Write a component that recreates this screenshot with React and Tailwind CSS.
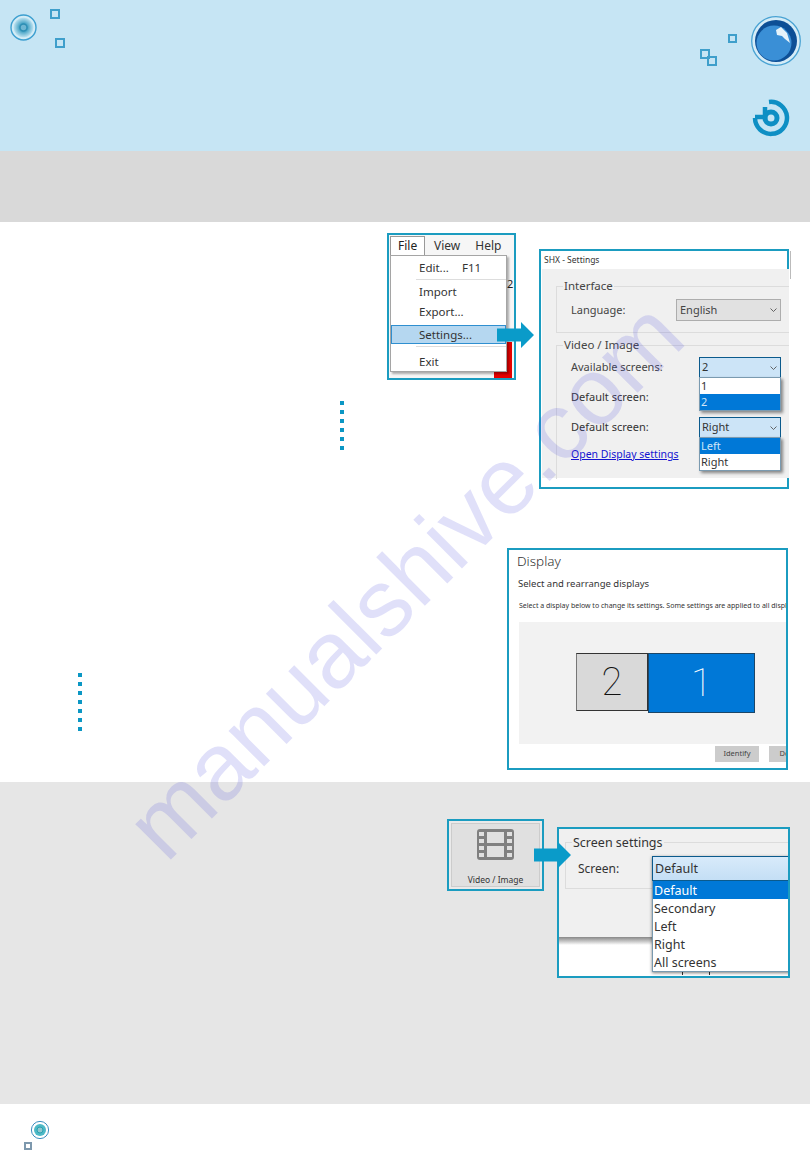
const fontUi = "font-['Noto_Sans',sans-serif]";

function Dots({ count = 6 }) {
  return (
    <div className="flex flex-col gap-[5px]">
      {Array.from({ length: count }).map((_, i) => (
        <div key={i} className="w-[4px] h-[4px] bg-[#0b97c4]"></div>
      ))}
    </div>
  );
}

function Arrow({ className }) {
  return (
    <svg className={className} width="37" height="26" viewBox="0 0 37 26">
      <path d="M0 6.5H24V0L37 13L24 26V19.5H0Z" fill="#0a9bc9" />
    </svg>
  );
}

function Chevron({ className }) {
  return (
    <svg className={className} width="7" height="4" viewBox="0 0 7 4" fill="none">
      <path d="M0.5 0.5L3.5 3.5L6.5 0.5" stroke="#555" strokeWidth="0.9" />
    </svg>
  );
}

function Select({ value, active }) {
  return (
    <div
      className={
        active
          ? "w-[82px] h-[21px] pl-[2px] pr-[3px] flex items-center justify-between bg-[#cce4f7] border border-[#0b5a8c] text-[11px] text-[#333]"
          : "w-[105px] h-[22px] pl-[3px] pr-[3px] flex items-center justify-between bg-[#e1e1e1] border border-[#adadad] text-[11px] text-[#444]"
      }
    >
      <span>{value}</span>
      <Chevron />
    </div>
  );
}

function DropList({ items, selected, className }) {
  return (
    <div className={`absolute z-10 bg-white border border-[#7a9ab0] shadow-[2px_2px_3px_rgba(0,0,0,0.45)] ${className}`}>
      {items.map((item) => (
        <div
          key={item}
          className={
            item === selected
              ? "h-[16px] pl-[1px] flex items-center bg-[#0078d7] text-[#cfe6f8] text-[11px]"
              : "h-[16px] pl-[1px] flex items-center text-[#333] text-[11px]"
          }
        >
          {item}
        </div>
      ))}
    </div>
  );
}

function MenuBox() {
  return (
    <div className={`relative w-[129px] h-[147px] border-2 border-[#1b9cc0] bg-[#f6f6f6] overflow-hidden ${fontUi} text-[12px] text-[#333]`}>
      <div className="flex h-[19px] mt-[1px] ml-[1px] text-[12px]">
        <div className="w-[35px] pl-[7px] bg-white border border-b-0 border-[#999] text-[#222] leading-[17px]">File</div>
        <div className="ml-[9px] leading-[19px]">View</div>
        <div className="ml-[15px] leading-[19px]">Help</div>
      </div>
      <div className="absolute right-[2px] bottom-0 w-[18px] h-[36px] bg-[#e60000]"></div>
      <div className="absolute left-[118px] top-[43px] text-[11px] leading-none text-[#222]">2</div>
      <div className="relative w-[117px] h-[117px] ml-[1px] bg-white border border-[#a5a5a5] shadow-[2px_2px_2px_rgba(0,0,0,0.3)]">
        <div className="h-[23px] pl-[28px] flex items-center text-[11.5px] text-[#333]">
          <span className="w-[43px]">Edit...</span>
          <span>F11</span>
        </div>
        <div className="ml-[25px] h-px bg-[#ddd]"></div>
        <div className="mt-[2px] h-[20px] pl-[28px] flex items-center text-[11.5px]">Import</div>
        <div className="h-[20px] pl-[28px] flex items-center text-[11.5px]">Export...</div>
        <div className="mt-[3px] w-[115px] h-[19px] pl-[27px] flex items-center bg-[#b5d7f0] border border-[#2f8fd0] text-[11.5px]">Settings...</div>
        <div className="mt-[2px] ml-[25px] h-px bg-[#ddd]"></div>
        <div className="h-[26px] pt-[3px] pl-[28px] flex items-center text-[11.5px]">Exit</div>
      </div>
    </div>
  );
}

function Fieldset({ label, className, children }) {
  return (
    <div className={`relative ml-[14px] border border-r-0 border-[#dcdcdc] ${className}`}>
      <span className="absolute -top-[9px] left-[6px] px-[1px] bg-[#f0f0f0] text-[11.5px] leading-[16px] text-[#444]">{label}</span>
      {children}
    </div>
  );
}

function SettingsBox() {
  return (
    <div className={`relative w-[250px] h-[240px] border-2 border-[#1b9cc0] bg-white ${fontUi}`}>
      <div className="h-[18px] pl-[3px] flex items-center text-[8.5px] text-[#333]">SHX - Settings</div>
      <div className="absolute right-[-4px] top-0 w-px h-[28px] bg-[#bbb]"></div>
      <div className="ml-[1px] w-[247px] h-[209px] pt-[17px] bg-[#f0f0f0]">
        <Fieldset label="Interface" className="h-[47px]">
          <div className="mt-[12px] pl-[14px] pr-[8px] flex items-center justify-between text-[11px] text-[#444]">
            <span>Language:</span>
            <Select value="English" />
          </div>
        </Fieldset>
        <Fieldset label="Video / Image" className="mt-[12px] h-[134px] border-b-0">
          <div className="mt-[11px] pl-[14px] pr-[8px] flex items-center justify-between text-[11px] text-[#444]">
            <span>Available screens:</span>
            <div className="relative">
              <Select value="2" active />
              <DropList items={["1", "2"]} selected="2" className="left-0 top-[20px] w-[82px]" />
            </div>
          </div>
          <div className="mt-[10px] h-[18px] pl-[14px] flex items-center text-[11px] text-[#333]">Default screen:</div>
          <div className="mt-[11px] pl-[14px] pr-[8px] flex items-center justify-between text-[11px] text-[#333]">
            <span>Default screen:</span>
            <div className="relative">
              <Select value="Right" active />
              <DropList items={["Left", "Right"]} selected="Left" className="left-0 top-[20px] w-[82px]" />
            </div>
          </div>
          <div className="mt-[8px] pl-[14px] text-[10.5px] leading-[16px] text-[#1414d0] underline">Open Display settings</div>
        </Fieldset>
      </div>
    </div>
  );
}

function DisplayBox() {
  return (
    <div className={`w-[281px] h-[222px] border-2 border-[#1b9cc0] bg-white overflow-hidden ${fontUi}`}>
      <div className="pl-[8px] pt-[1px] text-[13.5px] leading-[20px] font-light text-[#333]">Display</div>
      <div className="pl-[9px] mt-[6px] text-[9.5px] leading-[14px] text-[#333]">Select and rearrange displays</div>
      <div className="pl-[10px] mt-[10px] text-[7px] leading-[10px] whitespace-nowrap text-[#333]">
        Select a display below to change its settings. Some settings are applied to all displays
      </div>
      <div className="ml-[10px] mt-[11px] h-[122px] pt-[31px] pl-[57px] flex items-start bg-[#f2f2f2]">
        <div className="w-[72px] h-[58px] flex items-center justify-center bg-[#d9d9d9] border border-[#333] border-l-[#777] font-['Roboto',sans-serif] text-[38px] font-thin text-[#111]">2</div>
        <div className="w-[107px] h-[60px] flex items-center justify-center bg-[#0078d7] border border-[#1c4668] font-['Roboto',sans-serif] text-[38px] font-thin text-white">1</div>
      </div>
      <div className="mt-[2px] flex pl-[206px] gap-[10px]">
        <div className="w-[44px] h-[16px] shrink-0 flex items-center justify-center bg-[#cccccc] text-[7.5px] text-[#444]">Identify</div>
        <div className="w-[44px] h-[16px] shrink-0 flex items-center justify-center bg-[#cccccc] text-[7.5px] text-[#444]">Detect</div>
      </div>
    </div>
  );
}

function VideoBox() {
  return (
    <div className="w-[97px] h-[72px] p-[2px] border-2 border-[#1b9cc0] bg-[#eaeaea]">
      <div className={`h-full pt-[5px] flex flex-col items-center bg-[#e0e0e0] border border-[#cccccc] ${fontUi}`}>
        <svg width="37" height="31" viewBox="0 0 37 31" fill="#808080" fillRule="evenodd">
          <path d="M3 0H34A3 3 0 0 1 37 3V28A3 3 0 0 1 34 31H3A3 3 0 0 1 0 28V3A3 3 0 0 1 3 0ZM2 3V7H7V3ZM2 10V14H7V10ZM2 17V21H7V17ZM2 24V28H7V24ZM30 3V7H35V3ZM30 10V14H35V10ZM30 17V21H35V17ZM30 24V28H35V24ZM10 3V14H27V3ZM10 17V28H27V17Z" />
        </svg>
        <div className="mt-[15px] text-[8.5px] leading-[10px] text-[#333]">Video / Image</div>
      </div>
    </div>
  );
}

function ScreenBox() {
  const items = ["Default", "Secondary", "Left", "Right", "All screens"];
  return (
    <div className={`relative w-[233px] h-[151px] border-2 border-[#1b9cc0] bg-white overflow-hidden ${fontUi}`}>
      <div className="h-[108px] pt-[13px] pl-[6px] bg-[#f0f0f0]">
        <div className="relative h-[47px] border border-r-0 border-[#dcdcdc]">
          <span className="absolute -top-[8px] left-[6px] px-[1px] bg-[#f0f0f0] text-[12.5px] leading-[16px] text-[#333]">Screen settings</span>
          <div className="pt-[18px] pl-[12px] text-[12px] leading-[16px] text-[#333]">Screen:</div>
        </div>
      </div>
      <div className="h-[8px] bg-gradient-to-b from-[#888] to-white"></div>
      <div className="absolute left-[123px] bottom-[1px] w-px h-[6px] bg-[#333]"></div>
      <div className="absolute left-[150px] bottom-[1px] w-px h-[6px] bg-[#333]"></div>
      <div className="absolute left-[93px] top-[27px] w-[140px] shadow-[0_1px_3px_rgba(0,0,0,0.5)]">
        <div className="h-[25px] pl-[2px] pt-[1px] flex items-center bg-gradient-to-b from-[#d8eafa] to-[#c4dff5] border border-[#0b5a8c] text-[12.5px] text-[#333]">Default</div>
        <div className="bg-white border-l border-b border-[#7a9ab0] text-[12.5px] text-[#333]">
          {items.map((item, index) => (
            <div
              key={item}
              className={
                index === 0
                  ? "h-[18px] pl-[1px] pt-[2px] flex items-center bg-[#0078d7] text-white"
                  : "h-[18px] pl-[1px] pt-[2px] flex items-center"
              }
            >
              {item}
            </div>
          ))}
        </div>
      </div>
    </div>
  );
}

function Square({ size = 9, color = "#3f9fcb" }) {
  return (
    <div
      className="border-2 bg-transparent"
      style={{ width: size, height: size, borderColor: color }}
    ></div>
  );
}

export default function App() {
  return (
    <div className="relative w-[810px] h-[1170px] overflow-hidden bg-white">
      <header className="h-[151px] flex justify-between bg-[#c6e5f4]">
        <div className="pt-[9px] pl-[10px] flex">
          <svg width="27" height="27" viewBox="0 0 27 27" className="mt-[5px]">
            <defs>
              <radialGradient id="lens">
                <stop offset="0.3" stopColor="#2f97bd" />
                <stop offset="1" stopColor="#bfe3f1" />
              </radialGradient>
            </defs>
            <circle cx="13.5" cy="13.5" r="12.5" fill="#d3ecf6" stroke="#3d9fd0" strokeWidth="1.4" />
            <circle cx="13.5" cy="13.5" r="10" fill="url(#lens)" />
            <circle cx="13.5" cy="13.5" r="3.5" fill="#6fb6d2" stroke="#2f8fb5" strokeWidth="1.5" />
          </svg>
          <div className="ml-[13px] flex flex-col">
            <Square size={10} />
            <div className="ml-[5px] mt-[19px]"><Square size={10} /></div>
          </div>
        </div>
        <div className="pt-[16px] pr-[9px] flex flex-col items-end">
          <div className="flex items-start">
            <div className="mt-[18px] mr-[14px] relative w-[37px] h-[34px]">
              <div className="absolute right-0 top-0"><Square size={9} /></div>
              <div className="absolute left-0 top-[15px]"><Square size={10} /></div>
              <div className="absolute left-[7px] top-[22px]"><Square size={10} /></div>
            </div>
            <svg width="50" height="50" viewBox="0 0 50 50">
              <circle cx="25" cy="25" r="24.3" fill="#d5ecf7" stroke="#4aa3d3" strokeWidth="1.3" />
              <circle cx="25" cy="25" r="21" fill="#0d4f96" />
              <circle cx="23" cy="27" r="17.5" fill="#3a8fd6" />
              <path d="M25 14L30 11L36 17L39 27L34 23L31 20L26 19Z" fill="#e6f3fa" />
            </svg>
          </div>
          <svg width="38" height="38" viewBox="0 0 38 38" className="mt-[31px] mr-[11px]" fill="none" stroke="#0e8fc4">
            <path d="M17 3A16 16 0 1 1 3 19" strokeWidth="4.5" />
            <circle cx="19" cy="19" r="6" strokeWidth="5" />
            <path d="M13 8V18H3" strokeWidth="4.5" />
          </svg>
        </div>
      </header>

      <div className="h-[71px] bg-[#d9d9d9]"></div>

      <main className="h-[560px] bg-white">
        <div className="h-[326px] pt-[11px] pl-[340px] flex items-start">
          <div className="mt-[168px] w-[47px]"><Dots /></div>
          <div className="relative">
            <MenuBox />
            <Arrow className="absolute left-[110px] top-[89px] z-10" />
          </div>
          <div className="ml-[23px] mt-[16px]"><SettingsBox /></div>
        </div>
        <div className="pl-[78px] flex items-start">
          <div className="mt-[125px] w-[429px]"><Dots count={7} /></div>
          <DisplayBox />
        </div>
      </main>

      <section className="h-[322px] bg-[#e6e6e6] pt-[37px] pl-[447px] flex items-start">
        <div className="relative">
          <VideoBox />
          <Arrow className="absolute left-[87px] top-[23px] z-10" />
        </div>
        <div className="ml-[13px] mt-[8px]"><ScreenBox /></div>
      </section>

      <footer className="pt-[16px] pl-[24px] flex items-start">
        <div className="mt-[22px]"><Square size={8} color="#7d98ad" /></div>
        <svg width="20" height="20" viewBox="0 0 20 20" className="ml-[-2px]">
          <circle cx="10" cy="10" r="8.6" fill="#fff" stroke="#3d8fc0" strokeWidth="1" />
          <circle cx="10" cy="10" r="6" fill="#4db9c6" />
          <circle cx="10" cy="10" r="3" fill="#8fc7ce" stroke="#2a9fb0" strokeWidth="1" />
        </svg>
      </footer>

      <div className="absolute left-[167px] top-[784px] z-20 origin-[0_81px] -rotate-45 whitespace-nowrap pointer-events-none font-['Liberation_Sans',sans-serif] text-[95px] leading-none text-[#3c3cdc]/[0.16]">
        manualshive.com
      </div>
    </div>
  );
}
